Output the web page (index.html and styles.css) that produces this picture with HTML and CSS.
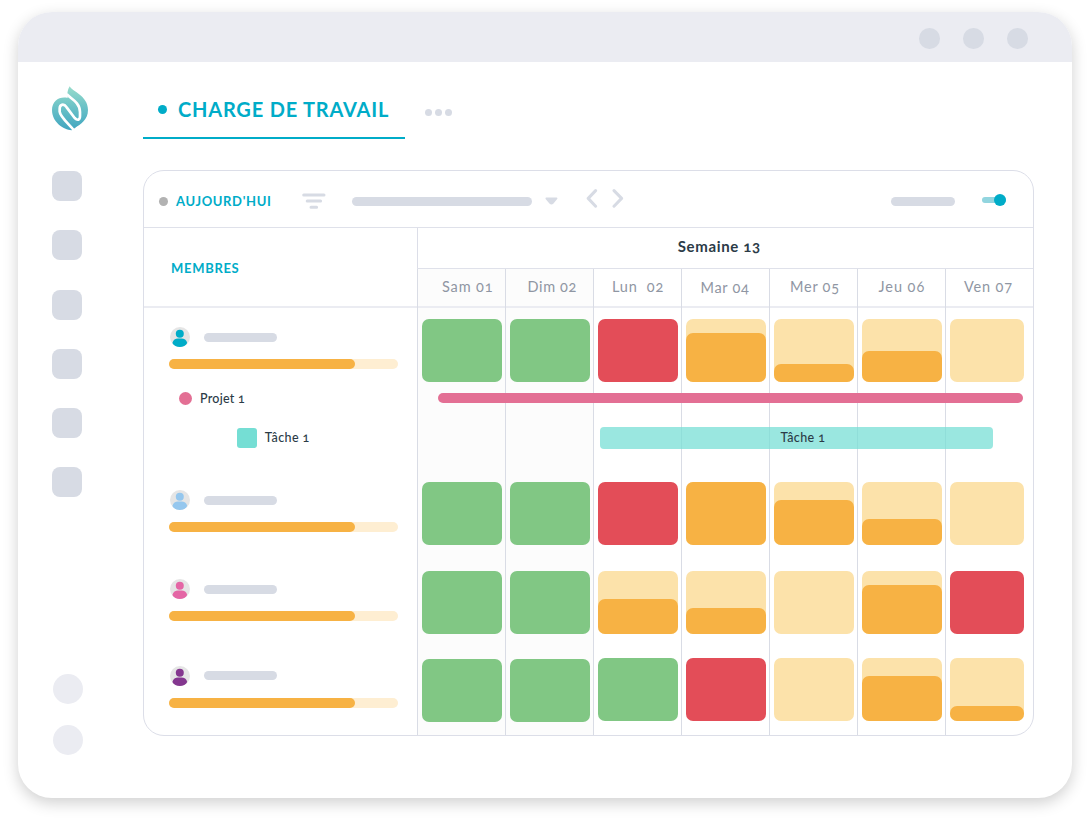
FILE: index.html
```html
<!DOCTYPE html>
<html lang="fr">
<head>
<meta charset="utf-8">
<title>Charge de travail</title>
<link rel="stylesheet" href="styles.css">
</head>
<body>
<svg width="0" height="0" class="defs">
  <symbol id="user" viewBox="0 0 20 20">
    <circle cx="10" cy="10" r="10" fill="#e5e5e5"/>
    <circle cx="9.8" cy="6.8" r="4" fill="currentColor"/>
    <path d="M2.4 15.9C3 13 5.500 11.600 8 11.600h3.600c2.500 0 5 1.400 5.600 4.300C16 18.600 13 20 9.800 20S3.600 18.600 2.400 15.900z" fill="currentColor"/>
  </symbol>
</svg>
<div class="window">
  <header class="titlebar"><i></i><i></i><i></i></header>
  <div class="content">
    <nav class="sidebar">
      <svg class="logo" viewBox="156 256 108 135">
        <defs><linearGradient id="g" x1="0" y1="0" x2="0" y2="1"><stop offset="0" stop-color="#98dccb"/><stop offset=".45" stop-color="#6dc3c7"/><stop offset="1" stop-color="#40a5c0"/></linearGradient></defs>
        <path fill="url(#g)" d="M209 257C217 273 264 285 264 328C264 358 241 371 226 381L215 389C190 387 156 364 156 328C156 300 180 286 203 292C201 281 202 267 209 257Z"/>
        <path fill="none" stroke="#fff" stroke-width="8" stroke-linejoin="round" d="M200 280C208 292 240 303 240 334V346C240 359 232 360 224 352L200 320C190 306 179 313 179 324V333C180 348 206 370 221 388"/>
      </svg>
      <div class="squares"><i></i><i></i><i></i><i></i><i></i><i></i></div>
      <div class="rounds"><i></i><i></i></div>
    </nav>
    <main class="main">
      <div class="tabs">
        <div class="tab"><i class="dot"></i><span class="tab-title">CHARGE DE TRAVAIL</span></div>
        <div class="more"><i></i><i></i><i></i></div>
      </div>
      <section class="panel">
        <div class="toolbar">
          <i class="dot grey"></i><span class="today">AUJOURD'HUI</span>
          <svg class="icon-filter" width="24" height="17" viewBox="0 0 24 17" stroke="#d7dbe4" stroke-width="3" stroke-linecap="round"><path d="M1.700 2H22M5.200 8H18.600M9 14.200H14.600"/></svg>
          <i class="bar select"></i>
          <svg class="caret" width="13" height="8" viewBox="0 0 13 8"><path fill="#d7dbe4" d="M1.200.5H11.600Q13 1 12 2.200L8.500 6.500Q6.400 8.500 4.400 6.500L.8 2.200Q0 1 1.200.5Z"/></svg>
          <svg class="chevrons" width="40" height="20" viewBox="0 0 40 20" fill="none" stroke="#d7dbe4" stroke-width="3" stroke-linecap="round" stroke-linejoin="round"><path d="M10.600 1.600L3.200 9.400L10.600 17.200M29 1.600L36.600 9.400L29 17.200"/></svg>
          <i class="bar option"></i>
          <i class="toggle"></i>
        </div>
        <div class="planning">
          <div class="members">
            <div class="members-head">MEMBRES</div>
            <div class="member c1">
              <div class="who"><svg class="avatar"><use href="#user"/></svg><i class="bar name"></i></div>
              <div class="progress"><i></i></div>
              <div class="project"><i></i>Projet 1</div>
              <div class="task"><i></i>Tâche 1</div>
            </div>
            <div class="member c2"><div class="who"><svg class="avatar"><use href="#user"/></svg><i class="bar name"></i></div><div class="progress"><i></i></div></div>
            <div class="member c3"><div class="who"><svg class="avatar"><use href="#user"/></svg><i class="bar name"></i></div><div class="progress"><i></i></div></div>
            <div class="member c4"><div class="who"><svg class="avatar"><use href="#user"/></svg><i class="bar name"></i></div><div class="progress"><i></i></div></div>
          </div>
          <div class="calendar">
            <div class="week"><span>Semaine 13</span></div>
            <div class="days">
              <div class="day off"><div class="label"><span>Sam 01</span></div><div class="tile ok"></div><div class="tile ok"></div><div class="tile ok"></div><div class="tile ok"></div></div>
              <div class="day off"><div class="label"><span>Dim 02</span></div><div class="tile ok"></div><div class="tile ok"></div><div class="tile ok"></div><div class="tile ok"></div></div>
              <div class="day lun"><div class="label"><span>Lun&nbsp; 02</span></div><div class="tile over"></div><div class="tile over"></div><div class="tile"><i style="height:35px"></i></div><div class="tile ok"></div></div>
              <div class="day mar"><div class="label"><span>Mar 04</span></div><div class="tile"><i style="height:49px"></i></div><div class="tile"><i style="height:63px"></i></div><div class="tile"><i style="height:26px"></i></div><div class="tile over"></div></div>
              <div class="day mer"><div class="label"><span>Mer 05</span></div><div class="tile"><i style="height:18px"></i></div><div class="tile"><i style="height:45px"></i></div><div class="tile"></div><div class="tile"></div></div>
              <div class="day jeu"><div class="label"><span>Jeu 06</span></div><div class="tile"><i style="height:31.500px"></i></div><div class="tile"><i style="height:26.500px"></i></div><div class="tile"><i style="height:49px"></i></div><div class="tile"><i style="height:45px"></i></div></div>
              <div class="day last"><div class="label"><span>Ven 07</span></div><div class="tile"></div><div class="tile"></div><div class="tile over"></div><div class="tile"><i style="height:14.500px"></i></div></div>
              <div class="span-project"></div>
              <div class="span-task"><span>Tâche 1</span></div>
            </div>
          </div>
        </div>
      </section>
    </main>
  </div>
</div>
</body>
</html>
```
FILE: styles.css
```css
* { box-sizing: border-box; }
body {
  margin: 0;
  padding: 12px 18px 0 18.300px;
  height: 822px;
  overflow: hidden;
  background: #fff;
  font-family: Lato, "Open Sans", sans-serif;
  font-variant-numeric: oldstyle-nums;
  color: #2b3b47;
}
i { display: block; flex: none; }
svg { display: block; flex: none; }
.defs { position: absolute; }
.window {
  display: flex;
  flex-direction: column;
  height: 785.500px;
  border-radius: 34px;
  background: #fff;
  box-shadow: 0 5px 15px rgba(0, 0, 0, .19);
  overflow: hidden;
}
.titlebar {
  display: flex;
  justify-content: flex-end;
  align-items: center;
  gap: 23.300px;
  height: 50px;
  padding: 3px 44.300px 0 0;
  background: #ebecf2;
}
.titlebar i { width: 20.700px; height: 20.700px; border-radius: 50%; background: #d7dbe4; }
.content { display: flex; flex: 1; }
.sidebar { width: 124.700px; padding: 23.700px 0 0 33.700px; }
.logo { width: 36px; height: 45px; }
.squares { display: grid; gap: 29.300px; margin-top: 40.600px; }
.squares i { width: 30px; height: 29.900px; border-radius: 8px; background: #d7dbe4; }
.rounds { display: grid; gap: 21px; margin: 177px 0 0 .8px; }
.rounds i { width: 30px; height: 30px; border-radius: 50%; background: #ebecf2; }
.main { width: 891px; padding-top: 20px; }
.tabs { display: flex; }
.tab {
  display: flex;
  align-items: center;
  width: 262px;
  height: 57px;
  padding-left: 15px;
  border-bottom: 2px solid #00acc8;
}
.dot { width: 9px; height: 9px; border-radius: 50%; background: #00acc8; }
.tab-title { margin: 0 0 2px 11px; font-size: 20px; font-weight: 700; line-height: 24px; color: #00acc8; white-space: nowrap; letter-spacing: .8px; }
.more { display: flex; gap: 3.400px; margin: 27.200px 0 0 19.600px; }
.more i { width: 7px; height: 7px; border-radius: 50%; background: #d7dbe4; }
.panel {
  height: 566px;
  margin-top: 31px;
  border: 1px solid #dcdee8;
  border-radius: 21px;
  overflow: hidden;
}
.toolbar {
  display: flex;
  align-items: center;
  height: 57px;
  padding: 4px 27px 0 15px;
  border-bottom: 1px solid #dfe1ea;
}
.dot.grey { background: #b2b2b2; }
.today { width: 118px; margin-left: 8px; font-size: 13px; font-weight: 700; letter-spacing: .65px; color: #00acc8; white-space: nowrap; }
.icon-filter { margin-left: 8px; }
.bar { height: 9px; border-radius: 5px; background: #d7dbe4; }
.select { width: 180px; margin-left: 26px; }
.caret { margin-left: 13px; }
.chevrons { margin: 0 0 5px 27px; }
.option { width: 64px; margin-left: auto; }
.toggle {
  position: relative;
  width: 24px;
  height: 6.500px;
  margin: 0 0 2px 27px;
  border-radius: 4px;
  background: #92d5df;
}
.toggle::after {
  content: "";
  position: absolute;
  right: 0;
  top: -2.800px;
  width: 12px;
  height: 12px;
  border-radius: 50%;
  background: #00acc8;
}
.planning { display: grid; grid-template-columns: 273px 616px; }
.members, .day { display: grid; grid-template-columns: 100%; }
.members { grid-template-rows: 80px 163.300px 89px 86.400px 88.300px; }
.members-head { padding: 32px 0 0 27px; border-bottom: 2px solid #ebecf2; font-size: 13px; font-weight: 700; line-height: 17px; letter-spacing: .7px; color: #00acc8; }
.member { padding: 19px 0 0 25px; }
.c1 { color: #00acc8; }
.c2 { color: #95c7ee; }
.c3 { color: #e466a5; }
.c4 { color: #84378f; }
.who { display: flex; align-items: center; gap: 14px; padding-left: .6px; }
.avatar { width: 20px; height: 20px; }
.name { width: 73.500px; }
.progress { width: 229px; height: 10px; margin-top: 12px; border-radius: 5px; background: #feeed2; }
.progress i { width: 186px; height: 10px; border-radius: 5px; background: #f7b244; }
.project, .task { display: flex; align-items: center; color: #2b3b47; font-size: 12.500px; line-height: 20px; font-weight: 500; letter-spacing: .25px; }
.project { margin: 19.500px 0 0 10px; gap: 8px; }
.project i { width: 13px; height: 13px; border-radius: 50%; background: #e36f94; }
.task { margin: 19.500px 0 0 67.800px; gap: 8px; letter-spacing: .4px; }
.task i { width: 20px; height: 20px; border-radius: 3px; background: #75ded4; }
.week { display: flex; justify-content: center; height: 40px; padding: 9px 12.500px 0 0; border-left: 1px solid #dcdee8; font-size: 15px; font-weight: 700; line-height: 18px; letter-spacing: .65px; }
.days { position: relative; display: grid; grid-template-columns: repeat(7, 88px); border-top: 1px solid #dfe1ea; }
.day {
  grid-template-rows: 39px 163.300px 89px 86.400px 88.300px;
  border-left: 1px solid #d9dce5;
}
.off { background: #fcfcfc; }
.label { padding-left: 18px; border-bottom: 2px solid #ebecf2; font-size: 14.500px; line-height: 36px; letter-spacing: .85px; color: #8f96a3; white-space: nowrap; }
.off .label { padding-left: 24px; }
.off + .off .label { padding-left: 21.500px; letter-spacing: .65px; }
.mar .label { padding-left: 18.500px; line-height: 37px; letter-spacing: .7px; }
.mer .label, .jeu .label { padding-left: 20px; letter-spacing: .75px; }
.jeu .label { padding-left: 20.500px; letter-spacing: .95px; }
.tile {
  display: flex;
  align-items: flex-end;
  width: 80px;
  height: 63px;
  margin: 11px 0 0 3.600px;
  border-radius: 7px;
  background: #fce2aa;
}
.off .tile { margin-left: 4px; }
.off .tile:last-of-type { margin-top: 11.900px; }
.last .tile { width: 74px; }
.tile.ok { background: #81c784; }
.tile.over { background: #e34d58; }
.tile i { width: 100%; border-radius: 7px; background: #f7b244; }
.span-project { position: absolute; left: 21px; top: 124.300px; width: 585.500px; height: 9.300px; border-radius: 5px; background: #e36f94; }
.span-task {
  position: absolute;
  left: 183px;
  top: 157.500px;
  width: 393.500px;
  height: 22.700px;
  padding-left: 180.500px;
  border-radius: 4px;
  background: rgba(117, 222, 212, .73);
  font-size: 12.500px;
  line-height: 22px;
  font-weight: 500;
  letter-spacing: .4px;
}
```
